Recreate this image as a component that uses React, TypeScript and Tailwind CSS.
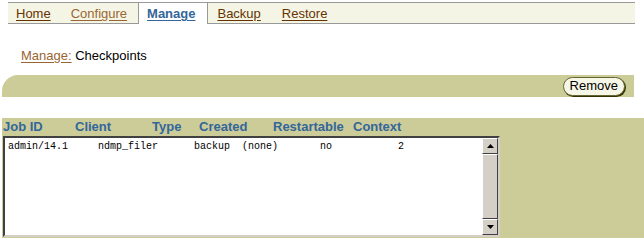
import React from "react";

const font = { fontFamily: '"Liberation Sans", Arial, sans-serif' };

function Arrow({ up }: { up?: boolean }) {
  return (
    <div className="w-[16px] h-[16px] bg-[#d4d0c8] border border-t-white border-l-white border-b-[#404040] border-r-[#404040] flex items-center justify-center">
      <svg width="7" height="4" viewBox="0 0 7 4">
        {up ? <polygon points="3.5,0 7,4 0,4" fill="#000" /> : <polygon points="0,0 7,0 3.5,4" fill="#000" />}
      </svg>
    </div>
  );
}

export default function App() {
  return (
    <div className="w-[644px] h-[241px] bg-white overflow-hidden text-[13px]" style={font}>
      {/* Tab bar */}
      <div className="mt-[2px] ml-[8px] w-[627px] h-[22px] border-t border-b border-[#999999] bg-[#f5f5e6] flex items-stretch leading-[21px]">
        <a className="pl-[8px] pr-[11px] text-[#663300] underline underline-offset-[2px]">Home</a>
        <a className="pl-[9px] pr-[11px] text-[#996633] underline underline-offset-[2px]">Configure</a>
        <a className="relative h-[21px] pl-[8px] pr-[12px] bg-white border-l border-r border-[#999999] font-bold text-[#336699] underline underline-offset-[2px]">Manage</a>
        <a className="pl-[9px] pr-[11px] text-[#663300] underline underline-offset-[2px]">Backup</a>
        <a className="pl-[10px] text-[#663300] underline underline-offset-[2px]">Restore</a>
      </div>

      {/* Breadcrumb */}
      <div className="mt-[24px] ml-[21px] leading-[16px]">
        <a className="text-[#996633] underline underline-offset-[2px]">Manage:</a>
        <span className="text-black"> Checkpoints</span>
      </div>

      {/* Olive action bar */}
      <div className="mt-[11px] ml-[2px] w-[632px] h-[22px] bg-[#cccc99] rounded-tl-[16px] flex items-center justify-end pr-[9px]">
        <button className="h-[19px] px-[6px] rounded-full bg-[#f7f7e7] border border-[#666633] shadow-[1px_1px_0_#333300] text-[13px] leading-[16px] text-black" style={font}>
          Remove
        </button>
      </div>

      {/* Table section */}
      <div className="mt-[21px] ml-[2px] h-[120px] bg-[#cccc99] flex flex-col">
        <div className="h-[18px] pl-[1px] flex items-center font-bold text-[#336699] text-[13px] leading-[18px]">
          <span className="w-[72px]">Job ID</span>
          <span className="w-[77px]">Client</span>
          <span className="w-[47px]">Type</span>
          <span className="w-[74px]">Created</span>
          <span className="w-[80px]">Restartable</span>
          <span>Context</span>
        </div>
        <div className="ml-[1px] w-[497px] h-[101px] border-2 border-t-[#404040] border-l-[#404040] border-b-[#d4d0c8] border-r-[#d4d0c8] bg-white flex">
          <div
            className="flex-1 pl-[3px] pt-[3px] whitespace-pre text-[10px] leading-[12px] text-black"
            style={{ fontFamily: '"Liberation Mono", "Courier New", monospace' }}
          >
            {"admin/14.1     ndmp_filer      backup  (none)       no           2"}
          </div>
          <div className="w-[16px] flex flex-col">
            <Arrow up />
            <div className="flex-1 bg-[#d4d0c8] border border-t-white border-l-white border-b-[#404040] border-r-[#404040]" />
            <Arrow />
          </div>
        </div>
      </div>
    </div>
  );
}
